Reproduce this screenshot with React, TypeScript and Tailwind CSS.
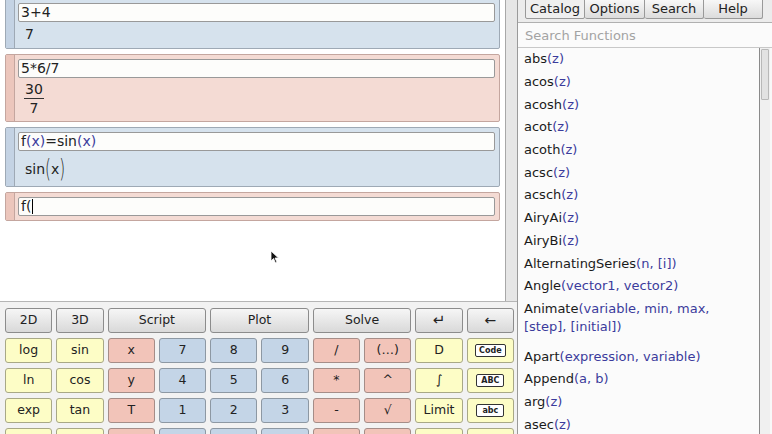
import * as React from "react";

const FONT = "font-['DejaVu_Sans',sans-serif]";

type Tone = "blue" | "pink";

const cellTone = {
  blue: {
    box: "bg-[#d6e2ed] border-[#9ea9b5]",
    bar: "bg-[#c4d3e4] border-[#9ea9b5]",
  },
  pink: {
    box: "bg-[#f4dbd4] border-[#c4a69f]",
    bar: "bg-[#ecc6bc] border-[#c4a69f]",
  },
};

function Cell({
  tone,
  height,
  input,
  children,
}: {
  tone: Tone;
  height: string;
  input: React.ReactNode;
  children?: React.ReactNode;
}) {
  const t = cellTone[tone];
  return (
    <div className={`flex shrink-0 border rounded-[2px] ${t.box} ${height}`}>
      <div className={`w-[9px] border-r ${t.bar}`} />
      <div className="flex-1 flex flex-col pt-[4px] pl-[3px] pr-[4px]">
        <div className="h-[19px] border border-[#999] bg-[#fdfdfb] rounded-[2px] pl-[2px] text-[14px] leading-[17px] text-[#222] flex items-center">
          {input}
        </div>
        {children}
      </div>
    </div>
  );
}

const blueTxt = "text-[#3b3b9c]";

type Key = { label: React.ReactNode; tone: "gray" | "yellow" | "pink" | "blue"; span?: 2 };

const keyTone = {
  gray: "bg-gradient-to-b from-[#f6f6f6] to-[#d9d9d9] border-[#8c8c8c]",
  yellow: "bg-[#fdfdc6] border-[#a8a886]",
  pink: "bg-[#f2c4b9] border-[#a58d88]",
  blue: "bg-[#c4d5e7] border-[#8d98a3]",
};

function Badge({ children }: { children: React.ReactNode }) {
  return (
    <span className="inline-flex items-center justify-center h-[13px] px-[3px] min-w-[28px] bg-white border border-[#333] rounded-[2px] text-[8px] font-bold leading-none text-[#222]">
      {children}
    </span>
  );
}

const rows: Key[][] = [
  [
    { label: "2D", tone: "gray" },
    { label: "3D", tone: "gray" },
    { label: "Script", tone: "gray", span: 2 },
    { label: "Plot", tone: "gray", span: 2 },
    { label: "Solve", tone: "gray", span: 2 },
    { label: <span className="text-[15px]">↵</span>, tone: "gray" },
    { label: <span className="text-[14px]">←</span>, tone: "gray" },
  ],
  [
    { label: "log", tone: "yellow" },
    { label: "sin", tone: "yellow" },
    { label: "x", tone: "pink" },
    { label: "7", tone: "blue" },
    { label: "8", tone: "blue" },
    { label: "9", tone: "blue" },
    { label: "/", tone: "pink" },
    { label: "(…)", tone: "pink" },
    { label: "D", tone: "yellow" },
    { label: <Badge>Code</Badge>, tone: "yellow" },
  ],
  [
    { label: "ln", tone: "yellow" },
    { label: "cos", tone: "yellow" },
    { label: "y", tone: "pink" },
    { label: "4", tone: "blue" },
    { label: "5", tone: "blue" },
    { label: "6", tone: "blue" },
    { label: "*", tone: "pink" },
    { label: "^", tone: "pink" },
    { label: "∫", tone: "yellow" },
    { label: <Badge>ABC</Badge>, tone: "yellow" },
  ],
  [
    { label: "exp", tone: "yellow" },
    { label: "tan", tone: "yellow" },
    { label: "T", tone: "pink" },
    { label: "1", tone: "blue" },
    { label: "2", tone: "blue" },
    { label: "3", tone: "blue" },
    { label: "-", tone: "pink" },
    { label: "√", tone: "pink" },
    { label: "Limit", tone: "yellow" },
    { label: <Badge>abc</Badge>, tone: "yellow" },
  ],
  [
    { label: "", tone: "yellow" },
    { label: "", tone: "yellow" },
    { label: "", tone: "pink" },
    { label: "", tone: "blue" },
    { label: "", tone: "blue" },
    { label: "", tone: "blue" },
    { label: "", tone: "pink" },
    { label: "", tone: "pink" },
    { label: "", tone: "yellow" },
    { label: "", tone: "yellow" },
  ],
];

type Fn = { name: string; args: string; wrap?: string };

const functions: Fn[] = [
  { name: "abs", args: "z" },
  { name: "acos", args: "z" },
  { name: "acosh", args: "z" },
  { name: "acot", args: "z" },
  { name: "acoth", args: "z" },
  { name: "acsc", args: "z" },
  { name: "acsch", args: "z" },
  { name: "AiryAi", args: "z" },
  { name: "AiryBi", args: "z" },
  { name: "AlternatingSeries", args: "n, [i]" },
  { name: "Angle", args: "vector1, vector2" },
  { name: "Animate", args: "variable, min, max,", wrap: "[step], [initial]" },
  { name: "Apart", args: "expression, variable" },
  { name: "Append", args: "a, b" },
  { name: "arg", args: "z" },
  { name: "asec", args: "z" },
];

function MousePointer() {
  return (
    <svg width="10" height="14" viewBox="0 0 10 14" className="absolute left-[270px] top-[250px]">
      <path d="M1 1 L1 11 L3.5 8.5 L5.5 13 L7 12.3 L5 8 L8.5 8 Z" fill="#111" stroke="#fff" strokeWidth="0.8" />
    </svg>
  );
}

export default function App() {
  return (
    <div className={`relative w-[772px] h-[434px] overflow-hidden flex bg-white ${FONT}`}>
      {/* left: algebra + keyboard */}
      <div className="w-[517px] flex flex-col">
        <div className="flex h-[301px] shrink-0">
          <div className="w-[505px] px-[5px] overflow-hidden">
            <div className="-mt-[2px] flex flex-col gap-[5px]">
              <Cell tone="blue" height="h-[51px]" input={<span>3+4</span>}>
                <div className="pl-[7px] text-[14px] leading-[24px] text-[#222]">7</div>
              </Cell>
              <Cell tone="pink" height="h-[68px]" input={<span>5*6/7</span>}>
                <div className="pl-[6px] mt-[2px] flex">
                  <div className="flex flex-col items-center text-[14px] text-[#222]">
                    <span className="leading-[18px] px-[1px]">30</span>
                    <span className="h-[1px] w-full bg-[#333]" />
                    <span className="leading-[18px]">7</span>
                  </div>
                </div>
              </Cell>
              <Cell
                tone="blue"
                height="h-[60px]"
                input={
                  <span>
                    f<span className={blueTxt}>(x)</span>=sin<span className={blueTxt}>(x)</span>
                  </span>
                }
              >
                <div className="pl-[7px] mt-[5px] h-[26px] flex items-center text-[14px] text-[#222]">
                  <span>sin</span>
                  <span className="inline-block scale-y-160 text-[15px] font-light">(</span>
                  <span>x</span>
                  <span className="inline-block scale-y-160 text-[15px] font-light">)</span>
                </div>
              </Cell>
              <Cell
                tone="pink"
                height="h-[29px]"
                input={
                  <span className="flex items-center">
                    f(<span className="inline-block w-[1px] h-[15px] bg-black ml-[1px]" />
                  </span>
                }
              />
            </div>
          </div>
          <div className="w-[12px] border-l border-[#a8a8a8] bg-[#e6e6e6]" />
        </div>
        {/* keyboard */}
        <div className="flex-1 min-h-0 overflow-hidden border-t border-[#b5b5b5] bg-[#f2f2f2] pt-[6px] pl-[5px] pr-[3px]">
          <div className="grid grid-cols-10 gap-x-[4px] gap-y-[5px]">
            {rows.map((row, ri) =>
              row.map((k, ki) => (
                <div
                  key={`${ri}-${ki}`}
                  className={`h-[25px] border rounded-[3px] flex items-center justify-center text-[12.5px] text-[#222] ${keyTone[k.tone]} ${k.span === 2 ? "col-span-2" : ""}`}
                >
                  {k.label}
                </div>
              ))
            )}
          </div>
        </div>
      </div>

      {/* right: catalog */}
      <div className="flex-1 flex flex-col border-l border-[#9a9a9a] bg-[#ececec]">
        <div className="h-[23px] shrink-0 flex items-start pl-[7px] border-b border-[#b0b0b0]">
          <div className="flex h-[20px] -mt-[1px] text-[13px] text-[#222]">
            <div className="w-[60px] flex items-center justify-center border border-[#999] bg-[#efefef] rounded-b-[2px]">Catalog</div>
            <div className="w-[60px] flex items-center justify-center border border-l-0 border-[#999] bg-gradient-to-b from-[#f7f7f7] to-[#dcdcdc] rounded-b-[2px]">Options</div>
            <div className="w-[59px] flex items-center justify-center border border-l-0 border-[#999] bg-gradient-to-b from-[#f7f7f7] to-[#dcdcdc] rounded-b-[2px]">Search</div>
            <div className="w-[59px] flex items-center justify-center border border-l-0 border-[#999] bg-gradient-to-b from-[#f7f7f7] to-[#dcdcdc] rounded-b-[2px]">Help</div>
          </div>
        </div>
        <div className="h-[25px] shrink-0 bg-[#fbfbfb] border-b border-[#c8c8c8] flex items-center pt-[2px] pl-[7px] text-[13px] text-[#a3a3a3]">
          Search Functions
        </div>
        <div className="flex-1 min-h-0 flex overflow-hidden">
          <div className="w-[242px] bg-[#fbfbfb] border-r border-[#8a8a8a] pl-[6px] overflow-hidden">
            {functions.map((f) => (
              <div
                key={f.name}
                className={`py-[2.35px] leading-[18px] text-[13px] text-[#1a1a1a] whitespace-nowrap ${f.wrap ? "pb-[9.5px]" : ""}`}
              >
                {f.name}
                <span className={blueTxt}>(</span>
                <span className={blueTxt}>{f.args}</span>
                {f.wrap ? (
                  <>
                    <br />
                    <span className={blueTxt}>{f.wrap})</span>
                  </>
                ) : (
                  <span className={blueTxt}>)</span>
                )}
              </div>
            ))}
          </div>
          <div className="w-[10px] bg-[#f0f0f0] pt-[1px]">
            <div className="h-[51px] mx-[1px] border border-[#b8b8b8] bg-[#e2e2e2] rounded-[1px]" />
          </div>
          <div className="flex-1 bg-[#f8f8f8]" />
        </div>
      </div>

      <MousePointer />
    </div>
  );
}
